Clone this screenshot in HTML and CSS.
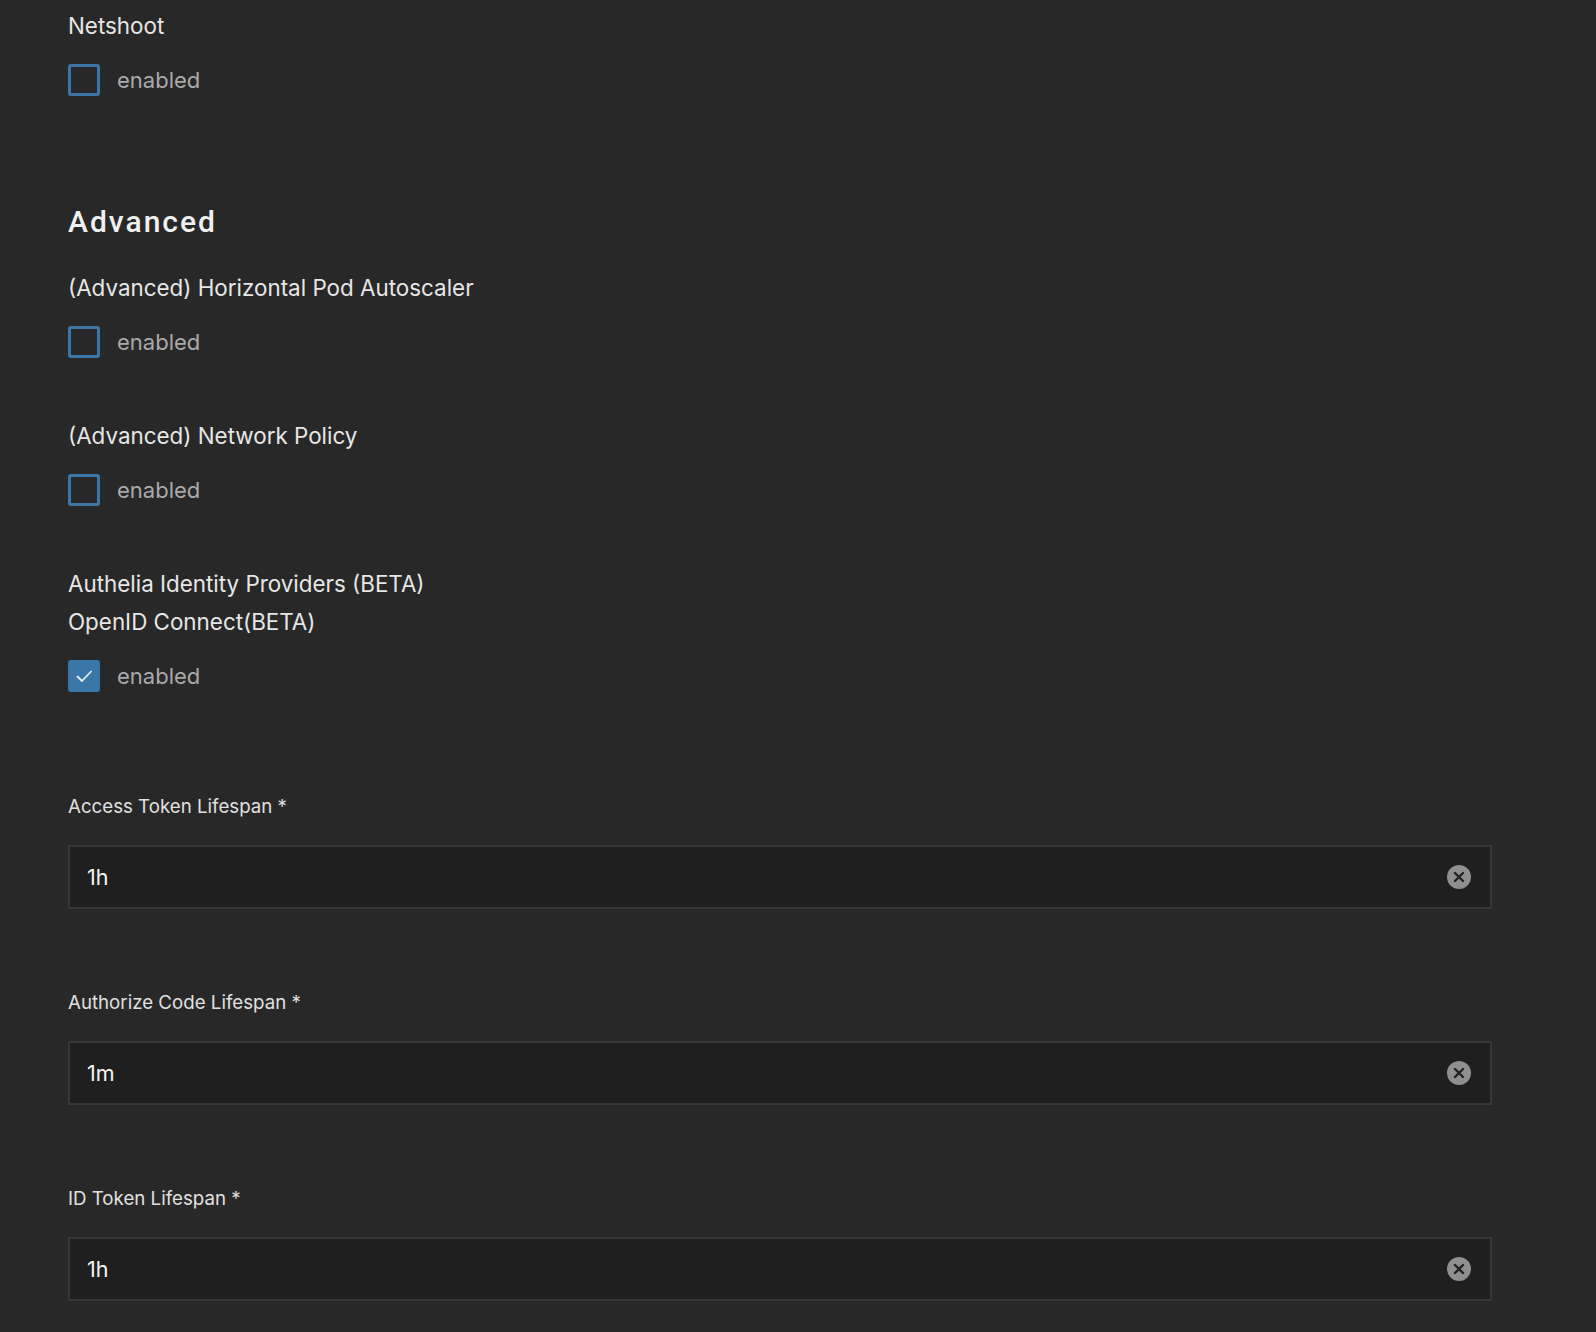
FILE: index.html
```html
<!DOCTYPE html>
<html>
<head>
<meta charset="utf-8">
<link rel="stylesheet" href="styles.css">
</head>
<body>
<div class="page">
  <div class="title t-netshoot">Netshoot</div>
  <label class="check-row">
    <span class="box"></span>
    <span class="check-label">enabled</span>
  </label>

  <h2 class="section">Advanced</h2>

  <div class="title t-hpa">(Advanced) Horizontal Pod Autoscaler</div>
  <label class="check-row">
    <span class="box"></span>
    <span class="check-label">enabled</span>
  </label>

  <div class="title t-gap">(Advanced) Network Policy</div>
  <label class="check-row">
    <span class="box"></span>
    <span class="check-label">enabled</span>
  </label>

  <div class="title t-gap">Authelia Identity Providers (BETA)</div>
  <div class="title t-sub">OpenID Connect(BETA)</div>
  <label class="check-row">
    <span class="box checked">
      <svg viewBox="0 0 32 32" width="32" height="32"><path d="M9.5 16.5 L14 21 L23 11.5" fill="none" stroke="#e6eef6" stroke-width="1.8" stroke-linecap="round" stroke-linejoin="round"/></svg>
    </span>
    <span class="check-label">enabled</span>
  </label>

  <div class="field first">
    <div class="field-label">Access Token Lifespan *</div>
    <div class="input">
      <span class="value">1h</span>
      <span class="clear"><svg viewBox="0 0 24 24" width="24" height="24"><circle cx="12" cy="12" r="12" fill="#8f8f8f"/><path d="M8 8 L16 16 M16 8 L8 16" stroke="#222" stroke-width="2.4" stroke-linecap="round"/></svg></span>
    </div>
  </div>

  <div class="field">
    <div class="field-label">Authorize Code Lifespan *</div>
    <div class="input">
      <span class="value">1m</span>
      <span class="clear"><svg viewBox="0 0 24 24" width="24" height="24"><circle cx="12" cy="12" r="12" fill="#8f8f8f"/><path d="M8 8 L16 16 M16 8 L8 16" stroke="#222" stroke-width="2.4" stroke-linecap="round"/></svg></span>
    </div>
  </div>

  <div class="field">
    <div class="field-label">ID Token Lifespan *</div>
    <div class="input">
      <span class="value">1h</span>
      <span class="clear"><svg viewBox="0 0 24 24" width="24" height="24"><circle cx="12" cy="12" r="12" fill="#8f8f8f"/><path d="M8 8 L16 16 M16 8 L8 16" stroke="#222" stroke-width="2.4" stroke-linecap="round"/></svg></span>
    </div>
  </div>
</div>
</body>
</html>
```

FILE: styles.css
```css
html, body {
  margin: 0;
  padding: 0;
  background: #282828;
}
body {
  font-family: Inter, Roboto, "Liberation Sans", sans-serif;
  color: #e2e2e2;
}
.page {
  padding: 12px 104px 40px 68px;
  min-height: 1280px;
}
.title {
  font-size: 22.4px;
  line-height: 28px;
  color: #e6e6e6;
}
.t-hpa { margin-top: 34px; }
.t-gap { margin-top: 64px; }
.t-sub { margin-top: 10px; }

.check-row {
  display: flex;
  align-items: center;
  height: 32px;
  margin-top: 24px;
}
.box {
  box-sizing: border-box;
  width: 32px;
  height: 32px;
  border: 3px solid #3b76a8;
  border-radius: 3px;
  display: flex;
  align-items: center;
  justify-content: center;
}
.box.checked {
  background: #3b76a8;
  border: none;
}
.check-label {
  margin-left: 17px;
  font-size: 22px;
  color: #aaaaaa;
}
.section {
  margin: 108px 0 0 0;
  font-family: Roboto, "Liberation Sans", sans-serif;
  font-size: 30px;
  line-height: 36px;
  font-weight: 500;
  letter-spacing: 2px;
  color: #f0f0f0;
}
.field { margin-top: 82px; }
.field.first { margin-top: 103px; }
.field-label {
  font-size: 18.7px;
  line-height: 24px;
  color: #e0e0e0;
}
.input {
  margin-top: 26px;
  box-sizing: border-box;
  height: 64px;
  border: 2px solid #363636;
  background: #1f1f1f;
  display: flex;
  align-items: center;
  padding: 0 19px 0 17px;
}
.value {
  flex: 1;
  font-size: 21.5px;
  color: #f4f4f4;
}
.clear {
  display: flex;
  width: 24px;
  height: 24px;
}
```
